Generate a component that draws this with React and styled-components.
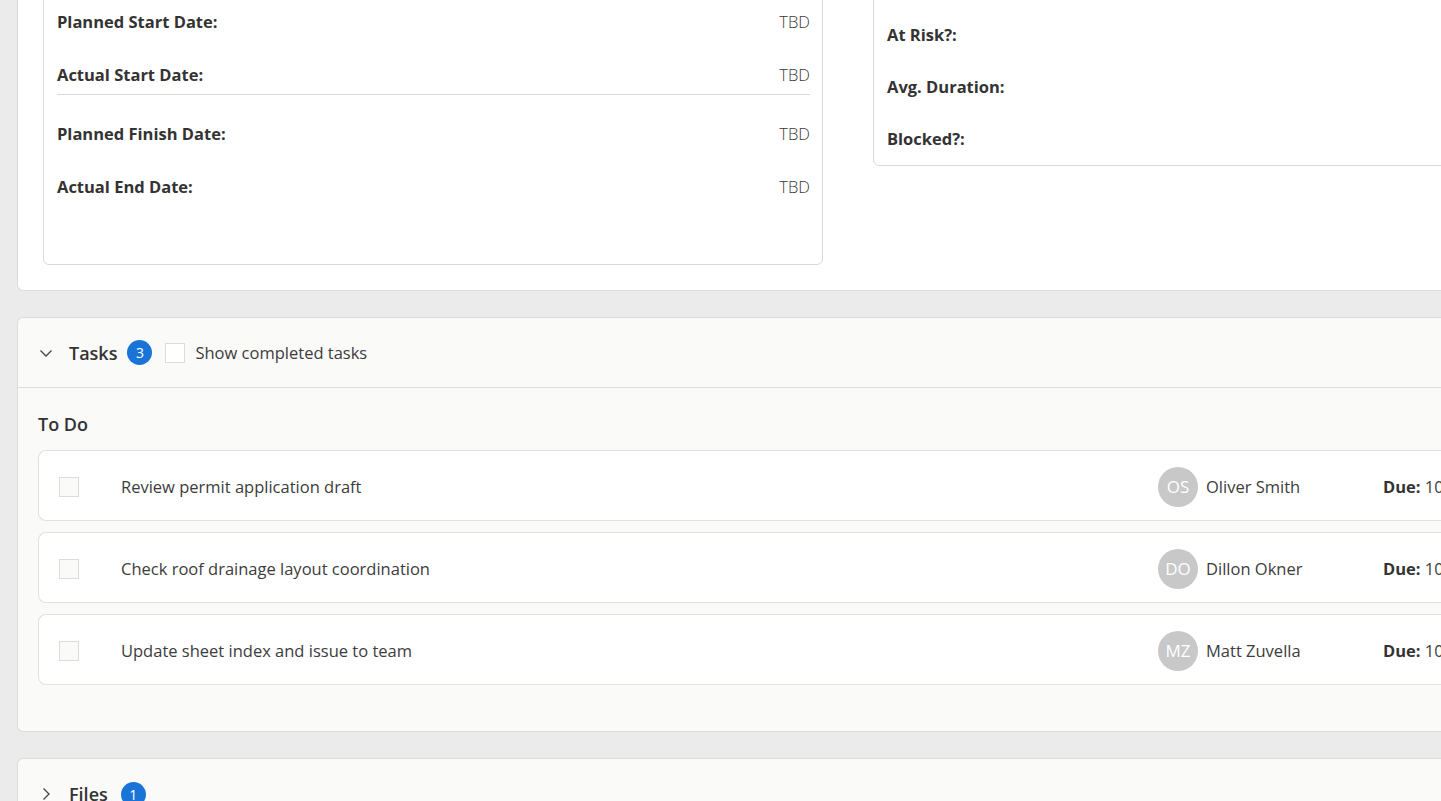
import React from "react";
import styled, { createGlobalStyle } from "styled-components";

const GlobalStyle = createGlobalStyle`
  html, body {
    margin: 0;
    padding: 0;
    background: #ebebeb;
    font-family: "Open Sans", "Noto Sans", sans-serif;
    color: #333;
    overflow: hidden;
  }
`;

const Page = styled.div`
  width: 1441px;
  height: 801px;
  overflow: hidden;
`;

/* page is scrolled: the details card starts above the fold */
const Column = styled.div`
  margin-top: -95px;
  padding-left: 17px;
  display: flex;
  flex-direction: column;
  gap: 26px;
`;

const Card = styled.section`
  width: 1460px;
  background: ${({ tone }) => tone || "#fff"};
  border: 1px solid #dcdcdc;
  border-right: none;
  border-radius: 6px 0 0 6px;
  box-sizing: border-box;
`;

const DetailsBody = styled.div`
  display: flex;
  align-items: flex-start;
  gap: 50px;
  padding: 27px 0 25px 25px;
`;

const Panel = styled.div`
  width: ${({ w }) => w}px;
  border: 1px solid #d9d9d6;
  border-radius: 6px;
  box-sizing: border-box;
  padding: ${({ pad }) => pad};
  display: flex;
  flex-direction: column;
  flex-shrink: 0;
`;

const Row = styled.div`
  display: flex;
  justify-content: space-between;
  align-items: ${({ line }) => (line ? "flex-start" : "center")};
  height: ${({ h }) => h || 53}px;
  padding-top: ${({ line }) => (line ? "16px" : "0")};
  box-sizing: border-box;
  font-size: 16.5px;
  border-bottom: ${({ line }) => (line ? "1px solid #d9d9d6" : "none")};
  margin-bottom: ${({ line }) => (line ? "12px" : "0")};
`;

const Label = styled.span`
  font-weight: 700;
  color: #333;
  line-height: 22px;
`;

const Value = styled.span`
  font-weight: 300;
  color: #3a3a3a;
  line-height: 22px;
`;

const Header = styled.div`
  display: flex;
  align-items: center;
  height: 70px;
  padding-left: 20px;
  border-bottom: ${({ open }) => (open ? "1px solid #dddddb" : "none")};
  box-sizing: border-box;
`;

const Chevron = styled.span`
  display: flex;
  width: 16px;
  height: 16px;
  margin-right: 15px;
  color: #444;
`;

const Title = styled.span`
  font-size: 18px;
  font-weight: 600;
  color: #333;
  margin-right: ${({ gap }) => gap}px;
`;

const Badge = styled.span`
  width: 25px;
  height: 25px;
  border-radius: 50%;
  background: #1a74d8;
  color: #fff;
  font-size: 14px;
  display: flex;
  align-items: center;
  justify-content: center;
  margin-right: 13px;
`;

const Box = styled.span`
  width: 20px;
  height: 20px;
  border: 1px solid #dcdcd9;
  background: ${({ bg }) => bg || "#fff"};
  box-sizing: border-box;
  flex-shrink: 0;
`;

const CheckLabel = styled.span`
  font-size: 16.5px;
  color: #3c3c3c;
  margin-left: 10px;
`;

const TaskBody = styled.div`
  padding: 22px 0 46px 20px;
`;

const Group = styled.h3`
  margin: 0 0 12px;
  font-size: 18px;
  font-weight: 600;
  color: #333;
  line-height: 28px;
`;

const TaskList = styled.div`
  display: flex;
  flex-direction: column;
  gap: 11px;
`;

const TaskCard = styled.div`
  height: 71px;
  box-sizing: border-box;
  background: #fff;
  border: 1px solid #e1e1df;
  border-right: none;
  border-radius: 8px 0 0 8px;
  display: flex;
  align-items: center;
  padding: 2px 0 0 20px;
`;

const TaskName = styled.span`
  font-size: 16.5px;
  color: #3c3c3c;
  margin-left: 42px;
  width: 1037px;
  flex-shrink: 0;
`;

const Avatar = styled.span`
  width: 40px;
  height: 40px;
  border-radius: 50%;
  background: #c8c8c8;
  color: #fff;
  font-size: 17px;
  display: flex;
  align-items: center;
  justify-content: center;
  flex-shrink: 0;
`;

const Person = styled.span`
  font-size: 16.5px;
  color: #3c3c3c;
  margin-left: 8px;
  width: 177px;
  flex-shrink: 0;
`;

const Due = styled.span`
  font-size: 16.5px;
  color: #3c3c3c;
  white-space: nowrap;
  b {
    font-weight: 700;
    color: #333;
  }
`;

const ChevronDown = () => (
  <svg viewBox="0 0 16 16" width="16" height="16" fill="none" stroke="currentColor" strokeWidth="1.3">
    <path d="M2.5 5.5 8 11 13.5 5.5" />
  </svg>
);

const ChevronRight = () => (
  <svg viewBox="0 0 16 16" width="16" height="16" fill="none" stroke="currentColor" strokeWidth="1.3">
    <path d="M5.5 2.5 11 8 5.5 13.5" />
  </svg>
);

const dates = [
  ["Planned Start Date:", "TBD"],
  ["Actual Start Date:", "TBD", true],
  ["Planned Finish Date:", "TBD"],
  ["Actual End Date:", "TBD"],
];

const stats = ["At Risk?:", "Avg. Duration:", "Blocked?:"];

const tasks = [
  ["Review permit application draft", "OS", "Oliver Smith"],
  ["Check roof drainage layout coordination", "DO", "Dillon Okner"],
  ["Update sheet index and issue to team", "MZ", "Matt Zuvella"],
];

export default function App() {
  return (
    <Page>
      <GlobalStyle />
      <Column>
        <Card>
          <DetailsBody>
            <Panel w={780} pad="61px 12px 51px 13px">
              {dates.map(([l, v, line]) => (
                <Row key={l} line={line} h={line ? 47 : 53}>
                  <Label>{l}</Label>
                  <Value>{v}</Value>
                </Row>
              ))}
            </Panel>
            <Panel w={620} pad="75px 13px 0 13px">
              {stats.map((l) => (
                <Row key={l} h={52}>
                  <Label>{l}</Label>
                </Row>
              ))}
            </Panel>
          </DetailsBody>
        </Card>

        <Card tone="#fafaf9">
          <Header open>
            <Chevron>
              <ChevronDown />
            </Chevron>
            <Title gap={10}>Tasks</Title>
            <Badge>3</Badge>
            <Box />
            <CheckLabel>Show completed tasks</CheckLabel>
          </Header>
          <TaskBody>
            <Group>To Do</Group>
            <TaskList>
              {tasks.map(([name, init, person]) => (
                <TaskCard key={name}>
                  <Box bg="#fafaf9" />
                  <TaskName>{name}</TaskName>
                  <Avatar>{init}</Avatar>
                  <Person>{person}</Person>
                  <Due>
                    <b>Due:</b> 10/24/2024
                  </Due>
                </TaskCard>
              ))}
            </TaskList>
          </TaskBody>
        </Card>

        <Card tone="#fafaf9">
          <Header>
            <Chevron>
              <ChevronRight />
            </Chevron>
            <Title gap={13}>Files</Title>
            <Badge>1</Badge>
          </Header>
        </Card>
      </Column>
    </Page>
  );
}
